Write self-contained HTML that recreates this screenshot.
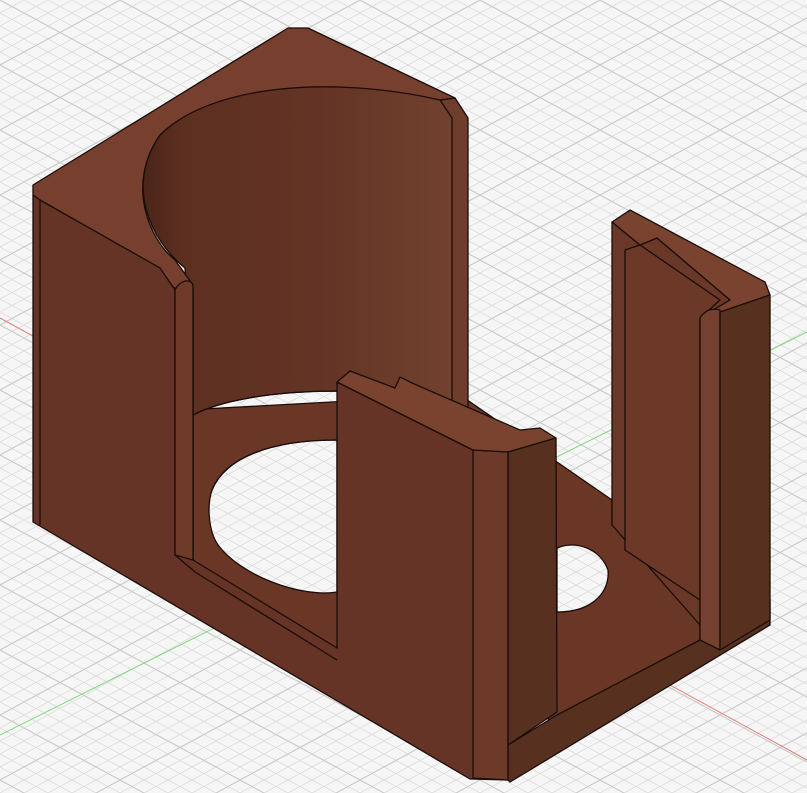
<!DOCTYPE html>
<html><head><meta charset="utf-8"><style>html,body{margin:0;padding:0;background:#f6f6f6;}svg{display:block}</style></head>
<body>
<svg width="807" height="793" viewBox="0 0 807 793" xmlns="http://www.w3.org/2000/svg">
<defs>
<pattern id="g" patternUnits="userSpaceOnUse" width="24" height="13">
<rect width="24" height="13" fill="#f6f6f6"/>
<path d="M0,0 L24,13 M0,13 L24,0" stroke="#dcdcdc" stroke-width="0.8" fill="none"/>
</pattern>
<pattern id="G" patternUnits="userSpaceOnUse" width="120" height="65">
<path d="M0,0 L120,65 M0,65 L120,0" stroke="#c8c8c8" stroke-width="1" fill="none"/>
</pattern>
<linearGradient id="cyl" x1="0" x2="1" y1="0" y2="0">
<stop offset="0" stop-color="#4a2519"/>
<stop offset="0.12" stop-color="#5c2f20"/>
<stop offset="0.6" stop-color="#643526"/>
<stop offset="1" stop-color="#74432f"/>
</linearGradient>
</defs>
<rect width="807" height="793" fill="url(#g)"/>
<rect width="807" height="793" fill="url(#G)"/>
<line x1="0" y1="318" x2="807" y2="760" stroke="#e08080" stroke-width="1"/>
<line x1="0" y1="735" x2="807" y2="332" stroke="#80d880" stroke-width="1"/>

<g stroke="#1a0d08" stroke-width="1.3" stroke-linejoin="round">
<!-- floor -->
<path d="M185,410 L460,395 L612,500 L612,525 L700,600 L700,640 L560,722 L337,665 L185,580 Z" fill="#6a3626"/>
<!-- holes -->
<path d="M212,490 C225,458 270,440 337,440 L337,592 C300,598 240,575 218,545 C208,530 207,505 212,490 Z" fill="url(#g)"/>
<path d="M212,490 C225,458 270,440 337,440" fill="none" stroke="#1a0d08" stroke-width="1.3"/>
<path d="M557,548 C575,540 600,548 608,570 C610,590 595,612 557,612 Z" fill="url(#g)"/>
<!-- cylinder interior -->
<path d="M185,268 C150,240 125,185 160,135 C210,85 330,72 455,100 L462,112 L462,405 C390,385 250,385 193,415 Z" fill="url(#cyl)"/>
<path d="M193,415 C250,385 390,385 462,405" fill="none"/>
<!-- back wall end strip -->
<path d="M440,100 L455,98 L468,118 L468,408 L452,402 L452,118 Z" fill="#6f3d2b"/>
<!-- top face -->
<path d="M33,185 L288,28 L308,28 L455,98 L440,100 C330,75 210,85 160,135 C125,185 150,240 175,260 L193,285 L178,290 L40,200 L33,195 Z" fill="#77402e"/>
<!-- front face -->
<path d="M33,195 L40,200 L160,268 L175,290 L193,290 L193,560 L337,648 L337,382 L473,450 L508,452 L508,780 L470,779 L33,522 Z" fill="#663426"/>
<line x1="40" y1="200" x2="40" y2="525"/>
<path d="M175,290 L175,555 L195,572 L337,660" fill="none"/>
<path d="M175,290 C180,280 190,278 193,285 L193,560 L175,555 Z" fill="#6e3a29"/>
<!-- slab rounded strip -->
<path d="M473,450 L508,452 L508,780 L473,778 Z" fill="#6d3a29"/>
<!-- slab top -->
<path d="M337,382 L350,371 L395,388 L400,377 L412,383 L520,430 L540,428 L556,438 L508,452 L473,450 Z" fill="#7a4330"/>
<!-- slab right face -->
<path d="M508,452 L556,438 L557,712 L508,745 Z" fill="#58301f"/>
<!-- base right face -->
<path d="M508,745 L557,715 L700,640 L770,600 L770,625 L510,782 L508,780 Z" fill="#58301f"/>
<!-- right wall inner face -->
<path d="M612,222 L640,245 L657,238 L730,300 L700,318 L700,625 L612,525 Z" fill="#6a3828"/>
<path d="M625,250 L640,245 L720,300 L700,318 L700,600 L625,550 Z" fill="#6c3929"/>
<!-- right wall top -->
<path d="M612,222 L630,210 L765,282 L770,295 L720,312 L700,318 L730,300 L657,238 L640,245 Z" fill="#7a4330"/>
<!-- right wall front fillet -->
<path d="M700,318 C705,310 712,308 720,310 L720,650 L700,640 Z" fill="#744030"/>
<!-- right wall outer face -->
<path d="M720,312 L770,295 L770,620 L720,650 Z" fill="#58301f"/>
</g>
</svg>
</body></html>
